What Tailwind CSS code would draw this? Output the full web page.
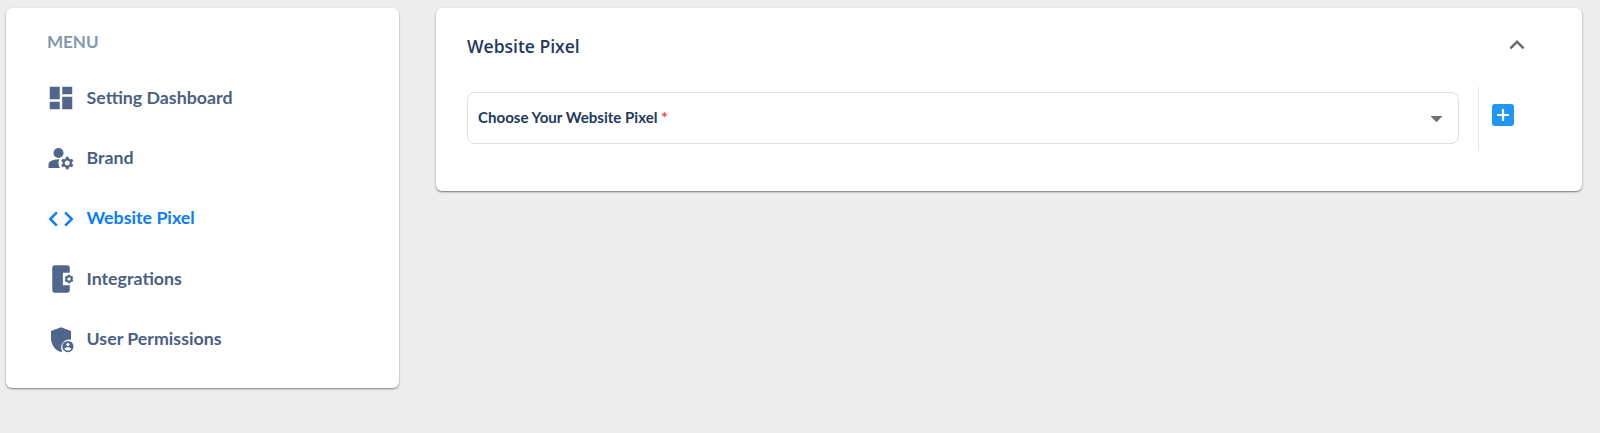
<!DOCTYPE html>
<html>
<head>
<meta charset="utf-8">
<script src="https://cdn.jsdelivr.net/npm/@tailwindcss/browser@4"></script>
</head>
<body class="bg-[#ededed] h-[433px] overflow-hidden font-['Lato',sans-serif]">
<div class="flex items-start gap-[37.5px] pt-2 pl-1.5 pr-[18px]">
  <aside class="w-[392.5px] h-[380px] shrink-0 bg-white rounded-md shadow-[0_1px_2px_rgba(0,0,0,0.45)] pl-10 pt-[23px]">
    <h2 class="text-[17px] leading-[22px] font-bold text-[#8097b5] ml-[1px]">MENU</h2>
    <nav class="mt-[15px] flex flex-col text-[#4a5f85] text-[17.8px] font-bold">
      <a class="h-[60.25px] flex items-center gap-[10.5px]">
        <svg class="w-[30px] h-[30px] fill-[#50668c]" viewBox="0 0 24 24"><path d="M3 13h8V3H3v10zm0 8h8v-6H3v6zm10 0h8V11h-8v10zm0-18v6h8V3h-8z"/></svg>
        <span class="pb-[2px]">Setting Dashboard</span>
      </a>
      <a class="h-[60.25px] flex items-center gap-[10.5px]">
        <svg class="w-[30px] h-[30px] fill-[#50668c]" viewBox="0 0 24 24"><circle cx="10" cy="8" r="4"/><path d="M10.67 13.02C10.45 13.01 10.23 13 10 13c-2.42 0-4.68.67-6.61 1.82C2.51 15.34 2 16.32 2 17.35V20h9.26c-.79-1.13-1.26-2.51-1.26-4 0-1.07.25-2.07.67-2.98z"/><path d="M20.75 16c0-.22-.03-.42-.06-.63l1.14-1.01-1-1.73-1.45.49c-.32-.27-.68-.48-1.08-.63L18 11h-2l-.3 1.49c-.4.15-.76.36-1.08.63l-1.45-.49-1 1.73 1.14 1.01c-.03.21-.06.41-.06.63s.03.42.06.63l-1.14 1.01 1 1.73 1.45-.49c.32.27.68.48 1.08.63L16 21h2l.3-1.49c.4-.15.76-.36 1.08-.63l1.45.49 1-1.73-1.14-1.01c.03-.21.06-.41.06-.63zM17 18c-1.1 0-2-.9-2-2s.9-2 2-2 2 .9 2 2-.9 2-2 2z"/></svg>
        <span class="pb-[2px]">Brand</span>
      </a>
      <a class="h-[60.25px] flex items-center gap-[10.5px] text-[#0a7cff]">
        <svg class="w-[30px] h-[30px] fill-[#0a7cff]" viewBox="0 0 24 24"><path d="M9.4 16.6 4.8 12l4.6-4.6L8 6l-6 6 6 6 1.4-1.4zm5.2 0 4.6-4.6-4.6-4.6L16 6l6 6-6 6-1.4-1.4z"/></svg>
        <span class="pb-[2px]">Website Pixel</span>
      </a>
      <a class="h-[60.25px] flex items-center gap-[10.5px]">
        <svg class="w-[30px] h-[30px] fill-[#50668c]" viewBox="0 0 24 24"><path d="M7 1h10c1.100 0 2 .9 2 2v4h-5.500v10H19v4c0 1.100-.9 2-2 2H7c-1.100 0-2-.9-2-2V3c0-1.100.9-2 2-2z"/><g transform="translate(18.4 12) scale(.85) translate(-18 -12)"><path d="M21.81 12.74l-.82-.63v-.22l.8-.63c.16-.12.2-.34.1-.51l-.85-1.480c-.1-.17-.3-.23-.5-.17l-.95.38-.19-.11-.15-1.010c-.03-.21-.2-.36-.4-.36h-1.710c-.2 0-.37.15-.4.34l-.14 1.010-.19.11-.95-.38c-.19-.06-.4 0-.5.17l-.85 1.480c-.1.17-.06.39.1.51l.8.63v.23l-.8.63c-.16.12-.2.34-.1.51l.85 1.480c.1.17.31.23.5.17l.95-.37.2.11.15 1.010c.03.2.2.34.4.34h1.710c.2 0 .37-.15.4-.34l.15-1.010.19-.11.95.38c.19.06.4 0 .5-.17l.85-1.480c.1-.17.06-.39-.1-.51zM18 13.500c-.83 0-1.500-.67-1.500-1.500s.67-1.500 1.500-1.500 1.500.67 1.500 1.500-.67 1.500-1.500 1.500z"/></g></svg>
        <span class="pb-[2px]">Integrations</span>
      </a>
      <a class="h-[60.25px] flex items-center gap-[10.5px]">
        <svg class="w-[30px] h-[30px] fill-[#50668c]" viewBox="0 0 24 24"><path d="M12 2.500 4 5.500v6c0 5 3.400 9.600 8 10.800.3-.1.6-.2.9-.3A6.500 6.500 0 0 1 20 12.600V5.500z"/><path fill-rule="evenodd" d="M17.500 13.500a4.500 4.500 0 1 0 0 9 4.500 4.500 0 0 0 0-9zm0 1.600a1.300 1.300 0 1 1 0 2.600 1.300 1.300 0 0 1 0-2.600zm0 6.100c-1.100 0-2.100-.5-2.700-1.300.1-.8 1.800-1.300 2.700-1.300s2.600.5 2.700 1.300c-.6.800-1.600 1.300-2.700 1.300z"/></svg>
        <span class="pb-[2px]">User Permissions</span>
      </a>
    </nav>
  </aside>
  <main class="flex-1 h-[182.5px] bg-white rounded-md shadow-[0_1px_2px_rgba(0,0,0,0.5)] pl-[31px]">
    <div class="h-[79px] flex items-center justify-between pr-[50px] pb-[2px]">
      <h1 class="text-[17.500px] font-semibold text-[#223a5e] font-['Open_Sans',sans-serif]">Website Pixel</h1>
      <svg class="w-[30px] h-[30px] fill-[#6b6b6b] mt-[-3px]" viewBox="0 0 24 24"><path d="M7.41 15.41 12 10.83l4.590 4.580L18 14l-6-6-6 6z"/></svg>
    </div>
    <div class="flex items-stretch">
      <div class="w-[991.500px] h-[52px] mt-[5px] border border-[#dedede] rounded-lg flex items-center justify-between pl-[10px] pr-[7px]">
        <span class="text-[15.100px] font-bold text-[#223a5e] pb-[2px]">Choose Your Website Pixel <span class="text-[#ef3b3b]">*</span></span>
        <svg class="w-[29px] h-[29px] fill-[#707070]" viewBox="0 0 24 24"><path d="m7 10 5 5 5-5z"/></svg>
      </div>
      <div class="w-px h-[64px] bg-[#e3e3e3] ml-[19px]"></div>
      <div class="ml-[13px] pt-[17px]">
        <div class="w-[22px] h-[22px] rounded-[3px] bg-[#2196f3] flex items-center justify-center">
          <svg class="w-[14px] h-[14px]" viewBox="0 0 14 14"><path d="M7 1v12M1 7h12" stroke="#fff" stroke-width="2.200" fill="none"/></svg>
        </div>
      </div>
    </div>
  </main>
</div>
</body>
</html>
